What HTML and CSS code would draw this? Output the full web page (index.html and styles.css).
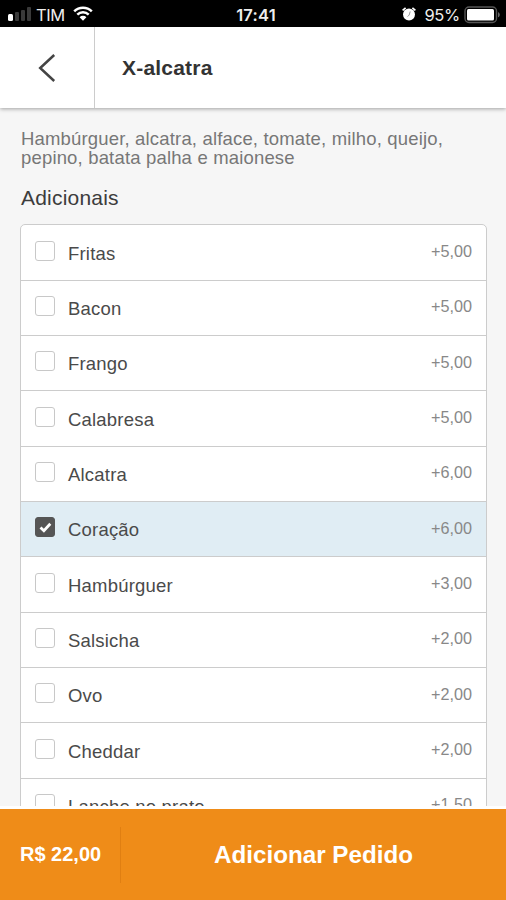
FILE: index.html
```html
<!DOCTYPE html>
<html lang="pt-BR">
<head>
    <meta charset="UTF-8">
    <meta name="viewport" content="width=device-width, initial-scale=1.0">
    <title>X-alcatra</title>
    <link rel="stylesheet" href="styles.css">
</head>
<body>
    <div class="status-bar">
        <div class="status-left">
            <svg class="signal" width="25" height="16" viewBox="0 0 25 16">
                <rect x="0" y="7" width="5" height="7" rx="1.5" fill="#fff"/>
                <rect x="7" y="5" width="4" height="9" rx="1" fill="#3a3a3a"/>
                <rect x="13" y="3" width="4" height="11" rx="1" fill="#3a3a3a"/>
                <rect x="19" y="0" width="4" height="14" rx="1" fill="#3a3a3a"/>
            </svg>
            <span class="carrier">TIM</span>
            <svg class="wifi" width="20" height="15" viewBox="0 0 20 15">
                <path d="M1.2 5.3a12.6 12.6 0 0 1 17.6 0M4.3 8.6a8.2 8.2 0 0 1 11.4 0" fill="none" stroke="#fff" stroke-width="2.5"/>
                <path d="M10 14.8L6.6 11.2a4.8 4.8 0 0 1 6.8 0z" fill="#fff"/>
            </svg>
        </div>
        <span class="clock">17:41</span>
        <div class="status-right">
            <svg class="alarm" width="14" height="14" viewBox="0 0 14 14">
                <circle cx="7" cy="7.6" r="6" fill="#fff"/>
                <path d="M.6 3.4L3.6.8M13.4 3.4L10.4.8" stroke="#fff" stroke-width="1.7"/>
                <path d="M8.2 4.5L7.2 8 5.6 9.6" fill="none" stroke="#999" stroke-width="1"/>
            </svg>
            <span class="percent">95%</span>
            <svg class="battery" width="37" height="18" viewBox="0 0 37 18">
                <rect x="1" y="1" width="31.5" height="15.5" rx="4" fill="none" stroke="#555" stroke-width="1.4"/>
                <rect x="3" y="3" width="27" height="11.5" rx="1.5" fill="#fff"/>
                <path d="M34 6.3c2.4.6 2.4 4.4 0 5z" fill="#666"/>
            </svg>
        </div>
    </div>

    <header class="header">
        <button class="back">
            <svg width="18" height="28" viewBox="0 0 18 28">
                <path d="M16.2 1L2.2 14l14 13" fill="none" stroke="#444" stroke-width="2.5"/>
            </svg>
        </button>
        <h1 class="title">X-alcatra</h1>
    </header>

    <main class="content">
        <p class="description">Hambúrguer, alcatra, alface, tomate, milho, queijo, pepino, batata palha e maionese</p>
        <h2 class="subtitle">Adicionais</h2>
        <ul class="options">
            <li class="option"><span class="check"></span><span class="name">Fritas</span><span class="price">+5,00</span></li>
            <li class="option"><span class="check"></span><span class="name">Bacon</span><span class="price">+5,00</span></li>
            <li class="option"><span class="check"></span><span class="name">Frango</span><span class="price">+5,00</span></li>
            <li class="option"><span class="check"></span><span class="name">Calabresa</span><span class="price">+5,00</span></li>
            <li class="option"><span class="check"></span><span class="name">Alcatra</span><span class="price">+6,00</span></li>
            <li class="option selected">
                <span class="check">
                    <svg width="13" height="11" viewBox="0 0 13 11">
                        <path d="M1.5 5.4l3.4 3.3 6.4-6.9" fill="none" stroke="#fff" stroke-width="2.8"/>
                    </svg>
                </span>
                <span class="name">Coração</span><span class="price">+6,00</span>
            </li>
            <li class="option"><span class="check"></span><span class="name">Hambúrguer</span><span class="price">+3,00</span></li>
            <li class="option"><span class="check"></span><span class="name">Salsicha</span><span class="price">+2,00</span></li>
            <li class="option"><span class="check"></span><span class="name">Ovo</span><span class="price">+2,00</span></li>
            <li class="option"><span class="check"></span><span class="name">Cheddar</span><span class="price">+2,00</span></li>
            <li class="option"><span class="check"></span><span class="name">Lanche no prato</span><span class="price">+1,50</span></li>
        </ul>
    </main>

    <footer class="footer">
        <span class="total">R$ 22,00</span>
        <button class="add">Adicionar Pedido</button>
    </footer>
</body>
</html>
```

FILE: styles.css
```css
* {
    box-sizing: border-box;
}
body {
    margin: 0;
    height: 900px;
    display: flex;
    flex-direction: column;
    overflow: hidden;
    background-color: #fff;
    color: #4a4a4a;
    font-family: "Liberation Sans", Arial, sans-serif;
}
button {
    border: none;
    background: none;
    padding: 0;
    font-family: inherit;
    cursor: pointer;
}

/* status bar */
.status-bar {
    flex: none;
    height: 27px;
    padding: 2px 5px 0 8px;
    display: grid;
    grid-template-columns: 1fr auto 1fr;
    align-items: center;
    background-color: #000;
    color: #eee;
    font-family: Inter, "Liberation Sans", sans-serif;
    font-size: 16.5px;
    line-height: 24px;
}
.status-left, .status-right {
    display: flex;
    align-items: center;
}
.status-right {
    justify-content: flex-end;
}
.carrier {
    margin-left: 3px;
    letter-spacing: -0.4px;
}
.wifi {
    margin-left: 8px;
    margin-top: -2px;
}
.clock {
    margin-left: 3px;
    font-weight: 600;
    letter-spacing: 0.2px;
}
.alarm {
    margin-top: -1px;
}
.percent {
    margin: 0 4px 0 8px;
    letter-spacing: -0.3px;
}
.battery {
    margin-top: 1px;
}

/* header */
.header {
    flex: none;
    height: 81px;
    display: flex;
    align-items: center;
    background-color: #fff;
    box-shadow: 0 1px 4px rgba(0, 0, 0, 0.35);
    z-index: 1;
}
.back {
    width: 95px;
    height: 81px;
    display: flex;
    align-items: center;
    justify-content: center;
    border-right: 1px solid #ccc;
}
.title {
    margin: 0 0 0 27px;
    font-size: 21px;
    letter-spacing: 0.2px;
    color: #333;
}

/* content */
.content {
    flex: none;
    height: 698px;
    padding: 21px 19px 0 20px;
    overflow: hidden;
    background-color: #f6f6f6;
}
.description {
    margin: 0 0 0 1px;
    font-size: 18.5px;
    line-height: 19px;
    letter-spacing: 0.17px;
    color: #777;
}
.subtitle {
    margin: 18px 0 13px 1px;
    font-size: 21px;
    font-weight: normal;
    line-height: 26px;
    letter-spacing: 0.2px;
    color: #3c3c3c;
}
.options {
    margin: 0;
    padding: 0.5px 0 0;
    list-style: none;
    border: 1px solid #ccc;
    border-radius: 5px;
    background-color: #fff;
}
.option {
    height: 55.33px;
    padding: 0 14px;
    display: flex;
    align-items: center;
    border-bottom: 1px solid #ccc;
}
.option.selected {
    background-color: #e0edf4;
}
.check {
    width: 20px;
    height: 20px;
    margin-top: -4px;
    display: flex;
    align-items: center;
    justify-content: center;
    border: 1px solid #c8c8c8;
    border-radius: 3px;
    background-color: #fff;
}
.selected .check {
    border-color: #555;
    background-color: #555;
}
.name {
    flex: 1;
    margin-left: 13px;
    padding-top: 2px;
    font-size: 18.5px;
    letter-spacing: 0.2px;
}
.price {
    margin-top: -2px;
    font-size: 16.2px;
    color: #888;
}

/* footer */
.footer {
    flex: none;
    margin-top: 3px;
    height: 91px;
    display: flex;
    align-items: center;
    background-color: #ef8c18;
    color: #fff;
    font-weight: bold;
}
.total {
    width: 121px;
    height: 56px;
    padding-left: 20px;
    border-right: 1px solid #e07f12;
    font-size: 20px;
    line-height: 54px;
}
.add {
    flex: 1;
    color: #fff;
    font-size: 24.2px;
    font-weight: bold;
}
```
